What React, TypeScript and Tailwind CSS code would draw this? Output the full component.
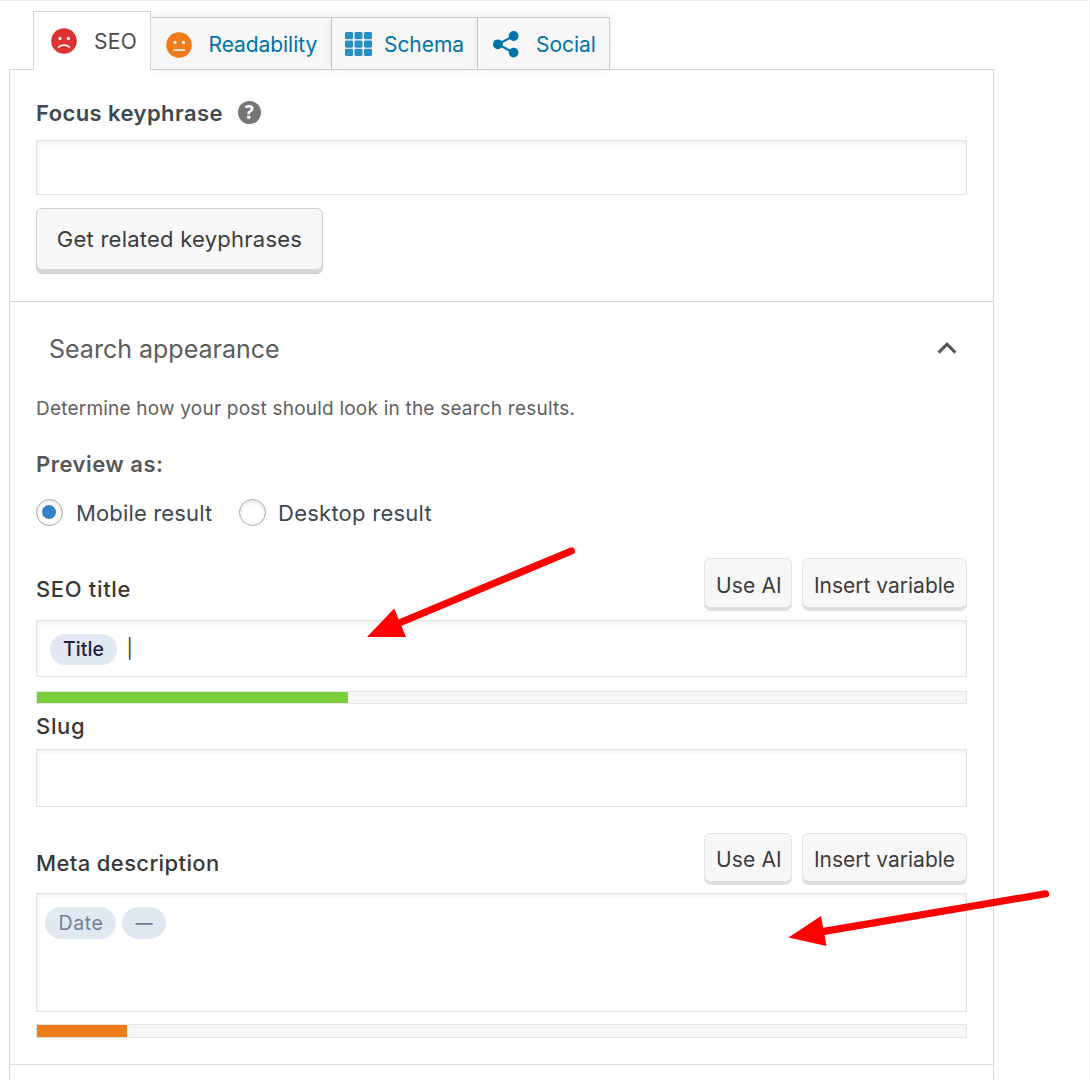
import type { ReactNode } from "react";

function Face({ color, mood }: { color: string; mood: "sad" | "neutral" }) {
  return (
    <svg width="26" height="26" viewBox="0 0 26 26" className="-mt-px shrink-0">
      <circle cx="13" cy="13" r="12.8" fill={color} />
      <circle cx="9" cy="10.4" r="1.6" fill="#fff" />
      <circle cx="17.4" cy="10.4" r="1.6" fill="#fff" />
      {mood === "sad" ? (
        <path d="M7.6 19.2 Q13 14.8 18.4 19.2" fill="none" stroke="#fff" strokeWidth="1.6" strokeLinecap="round" />
      ) : (
        <path d="M8 18 H18.4" stroke="#fff" strokeWidth="1.6" strokeLinecap="round" />
      )}
    </svg>
  );
}

function GridIcon() {
  return (
    <svg width="27" height="25" viewBox="0 0 27 25" className="-mt-px shrink-0" fill="#2490c4">
      {[0, 8.4, 16.8].map((y) =>
        [0, 9.5, 19].map((x) => <rect key={`${x}-${y}`} x={x} y={y} width="8" height="7.3" rx="1.4" />)
      )}
    </svg>
  );
}

function ShareIcon() {
  return (
    <svg width="26" height="27" viewBox="0 0 26 27" className="-mt-[2px] shrink-0" fill="#0073aa">
      <path d="M20.5 5 L5 13.3 L20.5 21.6" fill="none" stroke="#0073aa" strokeWidth="2.2" />
      <circle cx="20.6" cy="5" r="4.9" />
      <circle cx="4.9" cy="13.3" r="4.9" />
      <circle cx="20.6" cy="21.6" r="4.9" />
    </svg>
  );
}

function Tab({ icon, label, className }: { icon: ReactNode; label: string; className: string }) {
  return (
    <div
      className={`flex h-[52px] items-center border-t border-r border-[#ccc] bg-[#f7f7f7] pt-[3px] text-[21px] tracking-[-0.06px] text-[#0073aa] shadow-[0_0_8px_rgba(0,0,0,0.1)] ${className}`}
    >
      {icon}
      <span>{label}</span>
    </div>
  );
}

function SmallButton({ children, className }: { children: ReactNode; className: string }) {
  return (
    <button
      className={`flex items-center justify-center rounded-[6px] border border-[#e2e2e2] bg-[#f7f7f7] text-[21px] text-[#3c3c3c] shadow-[inset_0_-3px_0_#dcdcdc] ${className}`}
    >
      {children}
    </button>
  );
}

function Field({ children, className }: { children?: ReactNode; className: string }) {
  return (
    <div className={`flex border border-[#e2e2e2] bg-white shadow-[inset_0_2px_4px_rgba(0,0,0,0.07)] ${className}`}>
      {children}
    </div>
  );
}

function Progress({ color, value, className }: { color: string; value: number; className: string }) {
  return (
    <div className={`border border-[#e4e4e4] bg-[#f6f6f6] ${className}`}>
      <div className="h-full" style={{ width: value, background: color }} />
    </div>
  );
}

function Radio({ checked }: { checked?: boolean }) {
  return (
    <span className="flex h-[27px] w-[27px] shrink-0 items-center justify-center rounded-full border border-[#a3a7ab] bg-white shadow-[inset_0_2px_4px_rgba(0,0,0,0.1)]">
      {checked && <span className="mr-px mb-px h-[14px] w-[14px] rounded-full bg-[#3582c4]" />}
    </span>
  );
}

export default function App() {
  return (
    <div className="relative h-[1080px] w-[1090px] overflow-hidden border-t border-r border-[#ececec] bg-white font-['Inter',sans-serif] whitespace-nowrap">
      <div className="flex h-[68px] items-end pl-[33px]">
        <div className="z-10 -mb-px flex h-[59px] w-[118px] items-center border border-b-0 border-[#d4d4d4] bg-white pl-[17px] text-[21px] tracking-[0.3px] text-[#4a4a4a]">
          <Face color="#dc3232" mood="sad" />
          <span className="mt-[2px] ml-[17px]">SEO</span>
        </div>
        <Tab className="w-[181px] gap-[16.5px] pl-[15px]" icon={<Face color="#ee7c1b" mood="neutral" />} label="Readability" />
        <Tab className="w-[146px] gap-[12.5px] pl-[12.5px]" icon={<GridIcon />} label="Schema" />
        <Tab className="w-[132px] gap-[17px] pl-[15px]" icon={<ShareIcon />} label="Social" />
      </div>

      <div className="ml-[9px] h-[1020px] w-[985px] border border-[#d4d4d4]">
        <section className="h-[232px] border-b border-[#d4d4d4] px-[26px] pt-[17px]">
          <div className="flex h-[52px] items-center">
            <h3 className="text-[22px] font-semibold tracking-[0.42px] text-[#404850]">Focus keyphrase</h3>
            <span className="-mt-[2px] ml-[15px] flex h-[23px] w-[23px] items-center justify-center rounded-full bg-[#757575] font-['Open_Sans',sans-serif] text-[19px] leading-none font-bold text-white">
              ?
            </span>
          </div>
          <Field className="mt-px h-[55px] w-[931px]" />
          <button className="mt-[13px] flex h-[66px] w-[287px] justify-center rounded-[6px] border border-[#ccc] bg-[#f7f7f7] pt-[14px] text-[22px] tracking-[0.24px] text-[#3c3c3c] shadow-[inset_0_-4px_0_#d6d6d6]">
            Get related keyphrases
          </button>
        </section>

        <section className="h-[763px] border-b border-[#dcdcdc] px-[26px]">
          <div className="flex h-[94px] items-center justify-between pr-[10px] pl-[13px]">
            <h2 className="mt-[2px] text-[25px] text-[#5c5c5c]">Search appearance</h2>
            <svg width="20" height="14" viewBox="0 0 20 14" className="mb-[3px]">
              <path d="M1.6 11.6 L10 3.2 L18.4 11.6" fill="none" stroke="#575757" strokeWidth="3" />
            </svg>
          </div>
          <p className="flex h-[26px] items-center text-[19px] tracking-[0.21px] text-[#606060]">
            Determine how your post should look in the search results.
          </p>
          <p className="mt-[29px] flex h-[27px] items-center text-[22px] font-semibold tracking-[0.49px] text-[#575757]">
            Preview as:
          </p>
          <div className="mt-[21px] flex h-[27px] items-center text-[22px] text-[#404850]">
            <Radio checked />
            <span className="mt-[2px] ml-[13px] w-[163px] tracking-[0.15px]">Mobile result</span>
            <Radio />
            <span className="mt-[2px] ml-[12px] tracking-[0.25px]">Desktop result</span>
          </div>

          <div className="mt-[32px] flex h-[62px] w-[931px] items-start">
            <label className="mt-[15px] text-[22px] leading-[32px] font-medium tracking-[0.65px] text-[#383838]">SEO title</label>
            <SmallButton className="ml-auto h-[53px] w-[88px] pt-[3px] pl-[2px] tracking-[0.13px]">Use AI</SmallButton>
            <SmallButton className="ml-[10px] h-[53px] w-[165px] pt-[3px]">Insert variable</SmallButton>
          </div>
          <Field className="h-[57px] w-[931px] items-center pl-[13px]">
            <span className="mt-px flex h-[31px] w-[67px] items-center justify-center rounded-full bg-[#e2e8f0] pt-px text-[19.5px] font-medium tracking-[0.07px] text-[#1e2340]">
              Title
            </span>
            <span className="mt-[2px] ml-[9.5px] text-[19px] text-[#383d45]">|</span>
          </Field>
          <Progress className="mt-[14px] h-[13px] w-[931px]" value={311} color="#7ad03a" />
          <label className="flex h-[45px] items-center text-[22px] font-medium tracking-[0.67px] text-[#383838]">Slug</label>
          <Field className="h-[58px] w-[931px]" />

          <div className="mt-[26px] flex h-[60px] w-[931px] items-start">
            <label className="mt-[14px] text-[22px] leading-[32px] font-medium tracking-[0.38px] text-[#383838]">Meta description</label>
            <SmallButton className="ml-auto h-[52px] w-[88px] pt-[2px] pl-[2px] tracking-[0.13px]">Use AI</SmallButton>
            <SmallButton className="ml-[10px] h-[52px] w-[165px] pt-[2px]">Insert variable</SmallButton>
          </div>
          <Field className="h-[119px] w-[931px] items-start gap-[6px] pt-[13px] pl-[8px]">
            <span className="flex h-[32px] w-[71px] items-center justify-center rounded-full bg-[#e2e8f0] pt-[2px] pl-px text-[19.5px] tracking-[0.6px] text-[#71809a]">
              Date
            </span>
            <span className="flex h-[32px] w-[44px] items-center justify-center rounded-full bg-[#e2e8f0] pt-[2px] text-[17px] font-semibold text-[#71809a]">
              —
            </span>
          </Field>
          <Progress className="mt-[12px] h-[14px] w-[931px]" value={90} color="#ee7c1b" />
        </section>
      </div>

      <svg className="absolute -top-px left-0 z-20" width="1090" height="1080" viewBox="0 0 1090 1080" fill="#f00">
        <path d="M571.3 551 L398 623.5" stroke="#f00" strokeWidth="7.2" strokeLinecap="round" />
        <path d="M367 637 L394.2 608.5 L406 637 Z" />
        <path d="M1045.5 893.8 L818 932.4" stroke="#f00" strokeWidth="7.2" strokeLinecap="round" />
        <path d="M788.5 937.5 L821 916 L826.5 946 Z" />
      </svg>
    </div>
  );
}
